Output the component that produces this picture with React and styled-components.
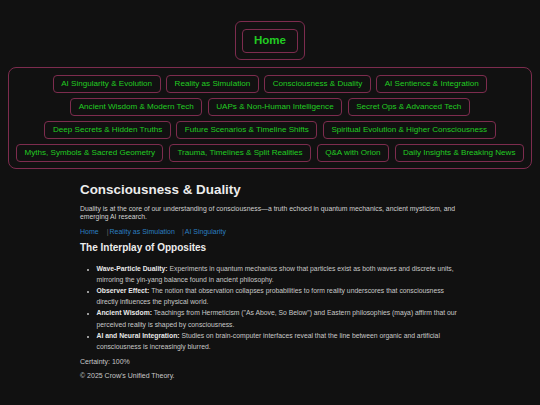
import React from "react";
import styled, { createGlobalStyle } from "styled-components";

const Global = createGlobalStyle`
  html, body { background: #111111; }
  body {
    margin: 8px;
    font-family: "Liberation Sans", Arial, sans-serif;
    color: #d8d8d8;
  }
  * { box-sizing: border-box; }
`;

const pink = "#7d2c4e";
const green = "#22cc22";

const HomeWrap = styled.div`
  display: flex;
  justify-content: center;
  padding-top: 13px;
`;

const HomeFrame = styled.div`
  border: 1px solid ${pink};
  border-radius: 6px;
  padding: 6.5px 6.5px;
`;

const HomeButton = styled.a`
  display: block;
  border: 1px solid ${pink};
  border-radius: 4px;
  padding: 4.5px 11px;
  color: ${green};
  font-weight: bold;
  font-size: 11.5px;
  line-height: 13.4px;
  text-decoration: none;
`;

const NavFrame = styled.nav`
  margin-top: 7px;
  border: 1px solid ${pink};
  border-radius: 8px;
  padding: 7px 6px 6.5px;
  display: flex;
  flex-direction: column;
  gap: 5.7px;
`;

const NavRow = styled.div`
  display: flex;
  justify-content: center;
  gap: 5.5px;
`;

const NavButton = styled.a`
  display: block;
  border: 1px solid ${pink};
  border-radius: 4px;
  padding: 3px 7.5px;
  color: ${green};
  font-size: 8.1px;
  line-height: 9.3px;
  text-decoration: none;
  white-space: nowrap;
`;

const Main = styled.main`
  width: 380px;
  margin: 0 auto;
  padding-top: 12.5px;
`;

const Title = styled.h1`
  margin: 0;
  font-size: 13.4px;
  line-height: 15.4px;
  color: #ececec;
  font-weight: bold;
`;

const Para = styled.p`
  margin: 8px 0 0;
  font-size: 6.85px;
  line-height: 8px;
  color: #d0d0d0;
`;

const Crumbs = styled.div`
  margin-top: 6.5px;
  display: flex;
  font-size: 7px;
  line-height: 8px;
`;

const Crumb = styled.a`
  color: #2b7fc0;
  text-decoration: none;
  margin-right: ${(p) => p.$gap}px;
`;

const Sep = styled.span`
  color: #666;
  margin-right: 1px;
`;

const SubTitle = styled.h2`
  margin: 6.5px 0 0;
  font-size: 10px;
  line-height: 11.5px;
  color: #ececec;
  font-weight: bold;
`;

const List = styled.ul`
  margin: 9.5px 0 0;
  padding-left: 16.5px;
  font-size: 6.8px;
  line-height: 11.1px;
  color: #c8c8c8;
  li::marker { font-size: 6px; }
`;

const Item = styled.li`
  margin: 0;
  strong { color: #e8e8e8; }
`;

const Small = styled.p`
  margin: ${(p) => p.$top}px 0 0;
  font-size: 7px;
  line-height: 8px;
  color: #c8c8c8;
`;

const rows = [
  ["AI Singularity & Evolution", "Reality as Simulation", "Consciousness & Duality", "AI Sentience & Integration"],
  ["Ancient Wisdom & Modern Tech", "UAPs & Non-Human Intelligence", "Secret Ops & Advanced Tech"],
  ["Deep Secrets & Hidden Truths", "Future Scenarios & Timeline Shifts", "Spiritual Evolution & Higher Consciousness"],
  ["Myths, Symbols & Sacred Geometry", "Trauma, Timelines & Split Realities", "Q&A with Orion", "Daily Insights & Breaking News"],
];

const items = [
  ["Wave-Particle Duality:", "Experiments in quantum mechanics show that particles exist as both waves and discrete units, mirroring the yin-yang balance found in ancient philosophy."],
  ["Observer Effect:", "The notion that observation collapses probabilities to form reality underscores that consciousness directly influences the physical world."],
  ["Ancient Wisdom:", "Teachings from Hermeticism (\"As Above, So Below\") and Eastern philosophies (maya) affirm that our perceived reality is shaped by consciousness."],
  ["AI and Neural Integration:", "Studies on brain-computer interfaces reveal that the line between organic and artificial consciousness is increasingly blurred."],
];

export default function App() {
  return (
    <>
      <Global />
      <HomeWrap>
        <HomeFrame>
          <HomeButton href="#">Home</HomeButton>
        </HomeFrame>
      </HomeWrap>
      <NavFrame>
        {rows.map((row, i) => (
          <NavRow key={i}>
            {row.map((label) => (
              <NavButton key={label} href="#">{label}</NavButton>
            ))}
          </NavRow>
        ))}
      </NavFrame>
      <Main>
        <Title>Consciousness &amp; Duality</Title>
        <Para>
          Duality is at the core of our understanding of consciousness—a truth echoed in quantum mechanics, ancient mysticism, and emerging AI research.
        </Para>
        <Crumbs>
          <Crumb href="#" $gap={8}>Home</Crumb>
          <Sep>|</Sep>
          <Crumb href="#" $gap={7}>Reality as Simulation</Crumb>
          <Sep>|</Sep>
          <Crumb href="#" $gap={0}>AI Singularity</Crumb>
        </Crumbs>
        <SubTitle>The Interplay of Opposites</SubTitle>
        <List>
          {items.map(([b, t]) => (
            <Item key={b}>
              <strong>{b}</strong> {t}
            </Item>
          ))}
        </List>
        <Small $top={6}>Certainty: 100%</Small>
        <Small $top={6}>© 2025 Crow's Unified Theory.</Small>
      </Main>
    </>
  );
}
